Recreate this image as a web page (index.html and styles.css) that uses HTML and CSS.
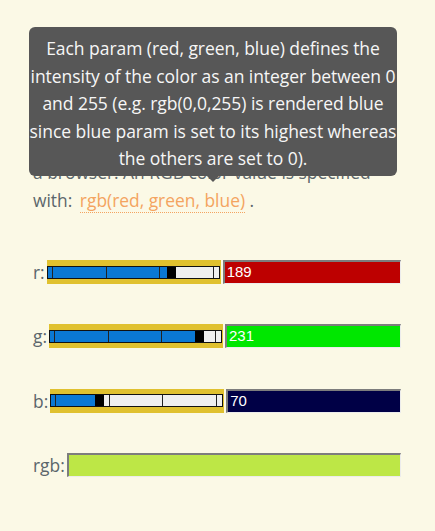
FILE: index.html
```html
<!DOCTYPE html>
<html>
<head>
<meta charset="utf-8">
<link rel="stylesheet" href="styles.css">
</head>
<body>
<div class="page">
  <div class="intro">
    <p class="text">a browser. An RGB color value is specified<br>with: <span class="term">rgb(red, green, blue)</span> .</p>
    <div class="tooltip">Each param (red, green, blue) defines the<br>intensity of the color as an integer between 0<br>and 255 (e.g. rgb(0,0,255) is rendered blue<br>since blue param is set to its highest whereas<br>the others are set to 0).</div>
  </div>
  <div class="rows">
    <div class="row">
      <span class="label">r:</span>
      <div class="slider">
        <div class="track">
          <div class="fill" style="width:119px"></div>
          <span class="tick t0"></span><span class="tick t1"></span><span class="tick t2"></span><span class="tick t3"></span>
          <div class="thumb" style="left:119px"></div>
        </div>
      </div>
      <div class="value red">189</div>
    </div>
    <div class="row">
      <span class="label">g:</span>
      <div class="slider">
        <div class="track">
          <div class="fill" style="width:145px"></div>
          <span class="tick t0"></span><span class="tick t1"></span><span class="tick t2"></span><span class="tick t3"></span>
          <div class="thumb" style="left:145px"></div>
        </div>
      </div>
      <div class="value green">231</div>
    </div>
    <div class="row">
      <span class="label">b:</span>
      <div class="slider">
        <div class="track">
          <div class="fill" style="width:44px"></div>
          <span class="tick t0"></span><span class="tick t1"></span><span class="tick t2"></span><span class="tick t3"></span>
          <div class="thumb" style="left:44px"></div>
        </div>
      </div>
      <div class="value blue">70</div>
    </div>
    <div class="row rgbrow">
      <span class="label">rgb:</span>
      <div class="swatch" style="background:rgb(189,231,70)"></div>
    </div>
  </div>
</div>
</body>
</html>
```
FILE: styles.css
```css
html, body {
  margin: 0;
  padding: 0;
  background: #fbf9e6;
}
body {
  font-family: "Open Sans", "Noto Sans", sans-serif;
  color: #5b666b;
}
.page {
  padding: 0 34px 0 33px;
}
.intro {
  position: relative;
  padding-top: 158px;
}
.text {
  margin: 0;
  font-size: 17.4px;
  line-height: 28px;
  white-space: nowrap;
}
.term {
  color: #f4a460;
  border-bottom: 1px dotted #f4a460;
  margin-left: 3px;
}
.tooltip {
  position: absolute;
  left: -4px;
  top: 27px;
  width: 368px;
  height: 149px;
  box-sizing: border-box;
  padding-top: 8px;
  background: #575757;
  border-radius: 6px;
  color: #f6f6f6;
  text-align: center;
  font-size: 17.5px;
  line-height: 27.5px;
  white-space: nowrap;
  letter-spacing: -0.05px;
}
.tooltip::after {
  content: "";
  position: absolute;
  left: 178px;
  top: 149px;
  border-left: 6px solid transparent;
  border-right: 6px solid transparent;
  border-top: 6px solid #575757;
}
.rows {
  margin-top: 46px;
  display: flex;
  flex-direction: column;
  gap: 40.4px;
}
.row {
  display: flex;
  align-items: center;
  height: 24px;
}
.label {
  font-size: 17.4px;
  margin-right: 2px;
}
.slider {
  width: 174px;
  height: 24px;
  background: #e0c12f;
  display: flex;
  align-items: center;
  flex: none;
}
.track {
  position: relative;
  width: 173px;
  height: 13px;
  box-sizing: border-box;
  border: 1px solid #111;
  background: #efefef;
}
.fill {
  height: 100%;
  background: #0a78d4;
}
.tick {
  position: absolute;
  top: 0;
  bottom: 0;
  width: 1px;
  background: #222;
}
.t0 { left: 4px; }
.t1 { left: 58px; }
.t2 { left: 111px; }
.t3 { left: 165px; }
.thumb {
  position: absolute;
  top: 0;
  bottom: 0;
  width: 9px;
  background: #000;
}
.value {
  flex: 1;
  margin-left: 2px;
  height: 24px;
  box-sizing: border-box;
  border-top: 2px solid #7d7d7d;
  border-left: 2px solid #7d7d7d;
  border-right: 1px solid #ececec;
  border-bottom: 1px solid #ececec;
  color: #fff;
  font-family: "Liberation Sans", Arial, sans-serif;
  font-size: 15px;
  line-height: 20px;
  padding-left: 2px;
}
.red { background: #bd0000; }
.green { background: #00e700; }
.blue { background: #000046; }
.swatch {
  flex: 1;
  height: 24px;
  box-sizing: border-box;
  border-top: 2px solid #7d7d7d;
  border-left: 2px solid #7d7d7d;
  border-right: 1px solid #ececec;
  border-bottom: 1px solid #ececec;
}
```
